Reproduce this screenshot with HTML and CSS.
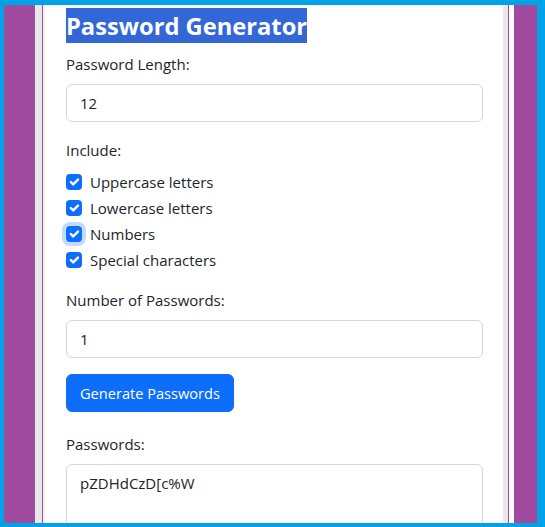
FILE: index.html
```html
<!DOCTYPE html>
<html lang="en">
<head>
<meta charset="utf-8">
<title>Password Generator</title>
<link rel="stylesheet" href="styles.css">
</head>
<body>
<div class="frame">
  <div class="page">
    <div class="shell">
      <div class="box">
        <div class="inner">
          <h2 class="title"><span class="sel">Password Generator</span></h2>
          <div class="group">
            <label class="label" for="len">Password Length:</label>
            <div class="input">12</div>
          </div>
          <div class="group">
            <div class="label">Include:</div>
            <div class="check"><span class="box-check"><svg viewBox="0 0 20 20"><path d="m6 10 3 3 6-6"/></svg></span><span>Uppercase letters</span></div>
            <div class="check"><span class="box-check"><svg viewBox="0 0 20 20"><path d="m6 10 3 3 6-6"/></svg></span><span>Lowercase letters</span></div>
            <div class="check"><span class="box-check focus"><svg viewBox="0 0 20 20"><path d="m6 10 3 3 6-6"/></svg></span><span>Numbers</span></div>
            <div class="check"><span class="box-check"><svg viewBox="0 0 20 20"><path d="m6 10 3 3 6-6"/></svg></span><span>Special characters</span></div>
          </div>
          <div class="group">
            <div class="label">Number of Passwords:</div>
            <div class="input">1</div>
          </div>
          <div class="btn-row">
            <button class="btn" type="button">Generate Passwords</button>
          </div>
          <div class="group">
            <div class="label">Passwords:</div>
            <div class="input area">pZDHdCzD[c%W</div>
          </div>
        </div>
      </div>
    </div>
  </div>
</div>
</body>
</html>
```

FILE: styles.css
```css
html, body {
  margin: 0;
  padding: 0;
}
body {
  font-family: "Open Sans", "Noto Sans", sans-serif;
  font-size: 15px;
  line-height: 24px;
  color: #212529;
  background: #ffffff;
}
.frame {
  box-sizing: border-box;
  width: 545px;
  height: 527px;
  border-style: solid;
  border-color: #00a2e8;
  border-width: 5px 8px 4px 4px;
  overflow: hidden;
  display: flex;
}
.page {
  flex: 1;
  display: flex;
  background: #a14ba0;
  padding: 0 23px 0 31px;
}
.shell {
  flex: 1;
  display: flex;
  border-left: 7px solid #e8e8e8;
  border-right: 5px solid #ffffff;
}
.box {
  flex: 1;
  display: flex;
  border-left: 1px solid #a14ba0;
  border-right: 1px solid #a14ba0;
}
.inner {
  flex: 1;
  background: #ffffff;
  border-left: 2px solid #f3f3f3;
  border-right: 5px solid #e8e8e8;
  padding: 6px 20px 0 21px;
}
.title {
  margin: 0 0 10px 0;
  font-size: 23.7px;
  font-weight: 700;
  line-height: 31px;
}
.sel {
  background: #3367d6;
  color: #ffffff;
  padding: 2px 0 1px;
}
.group {
  margin-bottom: 16px;
}
.label {
  display: block;
  margin-bottom: 8px;
}
.input {
  box-sizing: border-box;
  height: 38px;
  border: 1px solid #d3d7dc;
  border-radius: 6px;
  padding: 6px 13px;
  background: #ffffff;
}
.area {
  height: 120px;
}
.check {
  display: flex;
  align-items: flex-start;
  min-height: 24px;
  margin-bottom: 2px;
}
.box-check {
  box-sizing: border-box;
  width: 16px;
  height: 16px;
  margin: 4px 8px 0 0;
  border-radius: 4px;
  background: #0d6efd;
  display: flex;
  flex: none;
}
.box-check svg {
  width: 16px;
  height: 16px;
  fill: none;
  stroke: #ffffff;
  stroke-width: 3;
  stroke-linecap: round;
  stroke-linejoin: round;
}
.box-check.focus {
  box-shadow: 0 0 0 4px rgba(13, 110, 253, 0.25);
}
.btn-row {
  margin-bottom: 20px;
}
.btn {
  box-sizing: border-box;
  height: 38px;
  padding: 6px 13px;
  border: 1px solid #0d6efd;
  border-radius: 6px;
  background: #0d6efd;
  color: #ffffff;
  font-family: "Open Sans", "Noto Sans", sans-serif;
  font-size: 14.6px;
  line-height: 24px;
  display: block;
}
```
